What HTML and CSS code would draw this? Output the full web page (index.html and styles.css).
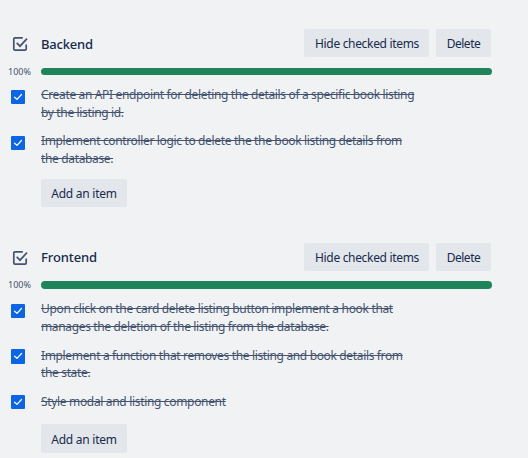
FILE: index.html
```
<!DOCTYPE html>
<html lang="en">
<head>
<meta charset="utf-8">
<title>Checklists</title>
<link rel="stylesheet" href="styles.css">
</head>
<body>
<svg class="defs" aria-hidden="true">
  <symbol id="checklist" viewBox="0 0 16 16"><path d="M10.8 1.8H3Q1.8 1.8 1.8 3V13Q1.8 14.2 3 14.2H13Q14.2 14.2 14.2 13V8.6M4.7 6.8L8 10.2L15 2.6" fill="none" stroke="currentColor" stroke-width="1.7"/></symbol>
  <symbol id="tick" viewBox="0 0 14 14"><path d="M3.5 7.2L6 9.3L10.5 4.5" fill="none" stroke="currentColor" stroke-width="1.2" stroke-linecap="round" stroke-linejoin="round"/></symbol>
</svg>
<main>
  <section class="checklist">
    <header class="head">
      <svg class="icon"><use href="#checklist"/></svg>
      <h3>Backend</h3>
      <button class="btn hide">Hide checked items</button>
      <button class="btn delete">Delete</button>
    </header>
    <div class="progress"><span class="percent">100%</span><div class="bar"></div></div>
    <ul>
      <li><span class="box"><svg><use href="#tick"/></svg></span><p>Create an API endpoint for deleting the details of a specific book listing<br>by the listing id.</p></li>
      <li><span class="box"><svg><use href="#tick"/></svg></span><p>Implement controller logic to delete the the book listing details from<br>the database.</p></li>
    </ul>
    <button class="btn add">Add an item</button>
  </section>
  <section class="checklist second">
    <header class="head">
      <svg class="icon"><use href="#checklist"/></svg>
      <h3>Frontend</h3>
      <button class="btn hide">Hide checked items</button>
      <button class="btn delete">Delete</button>
    </header>
    <div class="progress"><span class="percent">100%</span><div class="bar"></div></div>
    <ul>
      <li><span class="box"><svg><use href="#tick"/></svg></span><p><span class="roomy">Upon click on the card delete listing button implement a hook that</span><br>manages the deletion of the listing from the database.</p></li>
      <li class="tight"><span class="box"><svg><use href="#tick"/></svg></span><p>Implement a function that removes the listing and book details from<br>the state.</p></li>
      <li class="last"><span class="box"><svg><use href="#tick"/></svg></span><p><span class="roomy">Style modal and listing component</span></p></li>
    </ul>
    <button class="btn add">Add an item</button>
  </section>
</main>
</body>
</html>
```
FILE: styles.css
```
* { box-sizing: border-box; }
body {
  margin: 0;
  height: 458px;
  overflow: hidden;
  background: #f1f2f4;
  color: #172b4d;
  font: 12px/18px "Noto Sans", sans-serif;
}
.defs { display: none; }
main { width: 492px; padding-top: 29px; }
.checklist { display: flex; flex-direction: column; }
.second { margin-top: 36px; }
.head { display: flex; align-items: center; height: 28px; padding: 0 1px 0 12px; }
.icon { width: 16px; height: 16px; margin: 2px 13px 0 0; color: #44546f; }
h3 { flex: 1; margin: 2px 0 0; font-size: 13px; font-weight: 500; letter-spacing: -0.2px; }
.second h3 { margin-top: 0; letter-spacing: -0.1px; }
.btn {
  height: 28px;
  padding: 2px 0 0;
  border: 0;
  border-radius: 2px;
  background: #e3e6ea;
  color: #172b4d;
  font: 12px/18px "Noto Sans", sans-serif;
  letter-spacing: -0.32px;
  white-space: nowrap;
}
.hide { width: 125px; margin-right: 7px; padding-left: 1px; }
.delete { width: 55px; letter-spacing: -0.5px; }
.add { width: 86px; margin: 10px 0 0 41px; letter-spacing: -0.25px; }
.progress { display: flex; height: 7px; margin-top: 11px; padding-left: 8px; }
.percent { width: 33px; color: #44546f; font-size: 9px; line-height: 8px; letter-spacing: 0; }
.bar { flex: 1; border-radius: 4px; background: #1f845a; }
ul { display: flex; flex-direction: column; gap: 10px; margin: 11px 0 0; padding: 0; list-style: none; }
li { display: flex; padding-left: 11px; }
.box { width: 14px; height: 14px; margin: 4px 16px 0 0; border-radius: 1px; background: #0c66e4; color: #fff; }
.box svg { display: block; width: 14px; height: 14px; }
p { margin: 0; color: #44546f; white-space: nowrap; text-decoration: line-through; letter-spacing: -0.35px; }
.roomy { letter-spacing: -0.33px; }
.add { margin-top: 11px; }
.second .progress { margin-top: 10px; height: 8px; }
.second .tight p { line-height: 17px; padding-top: 1px; }
.second .tight .box { margin-top: 3px; height: 15px; }
.second .last { margin-top: 1px; }
.second .last p { padding-top: 1px; }
.second .last .box { margin-top: 3px; }
.second .add { height: 29px; margin-top: 13px; }
```
